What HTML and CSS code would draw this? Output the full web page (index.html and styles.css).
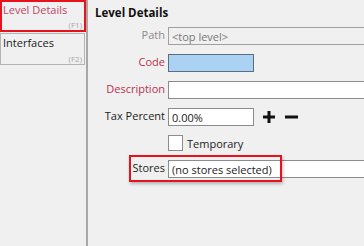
FILE: index.html
```html
<!DOCTYPE html>
<html lang="en">
<head>
    <meta charset="UTF-8">
    <title>Level Details</title>
    <link rel="stylesheet" href="styles.css">
</head>
<body>
    <div class="window">
        <div class="sidebar">
            <div class="tab active">
                <span class="tab-name">Level Details</span>
                <span class="tab-key">(F1)</span>
            </div>
            <div class="tab">
                <span class="tab-name">Interfaces</span>
                <span class="tab-key">(F2)</span>
            </div>
        </div>

        <div class="content">
            <div class="heading">Level Details</div>

            <div class="form">
                <div class="label muted">Path</div>
                <div class="field wide readonly">&lt;top level&gt;</div>

                <div class="label required">Code</div>
                <div class="field short selected"></div>

                <div class="label required">Description</div>
                <div class="field wide"></div>

                <div class="label">Tax Percent</div>
                <div class="field-line">
                    <div class="field short">0.00%</div>
                    <!-- botones + y - -->
                    <svg class="op" width="14" height="14" viewBox="0 0 14 14"><path d="M7 1v12M1 7h12" stroke="#111" stroke-width="3"/></svg>
                    <svg class="op" width="14" height="14" viewBox="0 0 14 14"><path d="M1 7h13" stroke="#111" stroke-width="3"/></svg>
                </div>

                <div class="label"></div>
                <label class="check">
                    <span class="box"></span>
                    <span>Temporary</span>
                </label>

                <div class="label">Stores</div>
                <div class="field wide">(no stores selected)</div>
                <div class="highlight"></div>
            </div>
        </div>
    </div>
</body>
</html>
```

FILE: styles.css
```css
body {
    margin: 0;
    padding: 0;
    background-color: #f0f0f0;
    font-family: "Open Sans", "Noto Sans", sans-serif;
    font-size: 11px;
    color: #222;
}

.window {
    display: flex;
    height: 246px;
    overflow: hidden;
}

/* Columna de pestañas */
.sidebar {
    width: 86px;
    flex-shrink: 0;
    border-right: 2px solid #a8a8a8;
    display: flex;
    flex-direction: column;
    gap: 1px;
}

.tab {
    height: 32px;
    width: 85px;
    box-sizing: border-box;
    border: 1px solid #b4b4b4;
    position: relative;
    padding: 2px 0 0 2px;
}

.tab.active {
    border: 2px solid #e8121c;
    padding: 1px 0 0 1px;
    width: 86px;
}

.tab-name {
    display: block;
    line-height: 14px;
    color: #222;
}

.tab.active .tab-name {
    color: #c04565;
}

.tab-key {
    position: absolute;
    right: 2px;
    bottom: 0;
    font-size: 8px;
    color: #a8a8a8;
}

/* Formulario */
.content {
    flex: 1;
    padding: 5px 0 0 7px;
    min-width: 0;
}

.heading {
    font-weight: bold;
    font-size: 11.5px;
    color: #111;
    line-height: 16px;
}

.form {
    display: grid;
    grid-template-columns: 70px 1fr;
    column-gap: 3px;
    row-gap: 9px;
    margin-top: 6px;
    position: relative;
}

.label {
    text-align: right;
    line-height: 16px;
}

.muted {
    color: #8a8a8a;
}

.required {
    color: #b9314f;
}

.field {
    height: 18px;
    box-sizing: border-box;
    border: 1px solid #8c8c8c;
    background-color: #fff;
    padding: 0 3px;
    line-height: 17px;
    white-space: nowrap;
}

.wide {
    width: 230px;
}

.short {
    width: 86px;
}

.readonly {
    background-color: #f0f0f0;
    border-color: #a0a0a0;
    color: #777;
}

.selected {
    background-color: #abd2f3;
    border-color: #5a6e80;
}

.field-line {
    display: flex;
    align-items: center;
    gap: 8px;
}

.check {
    display: flex;
    align-items: center;
    gap: 4px;
    height: 16px;
}

.box {
    width: 13px;
    height: 14px;
    border: 1px solid #8c8c8c;
    background-color: #fff;
}

.highlight {
    position: absolute;
    left: 34px;
    bottom: -4px;
    width: 149px;
    height: 23px;
    border: 2px solid #e8121c;
    box-shadow: 1px 2px 3px rgba(0, 0, 0, 0.25);
    pointer-events: none;
}
```
